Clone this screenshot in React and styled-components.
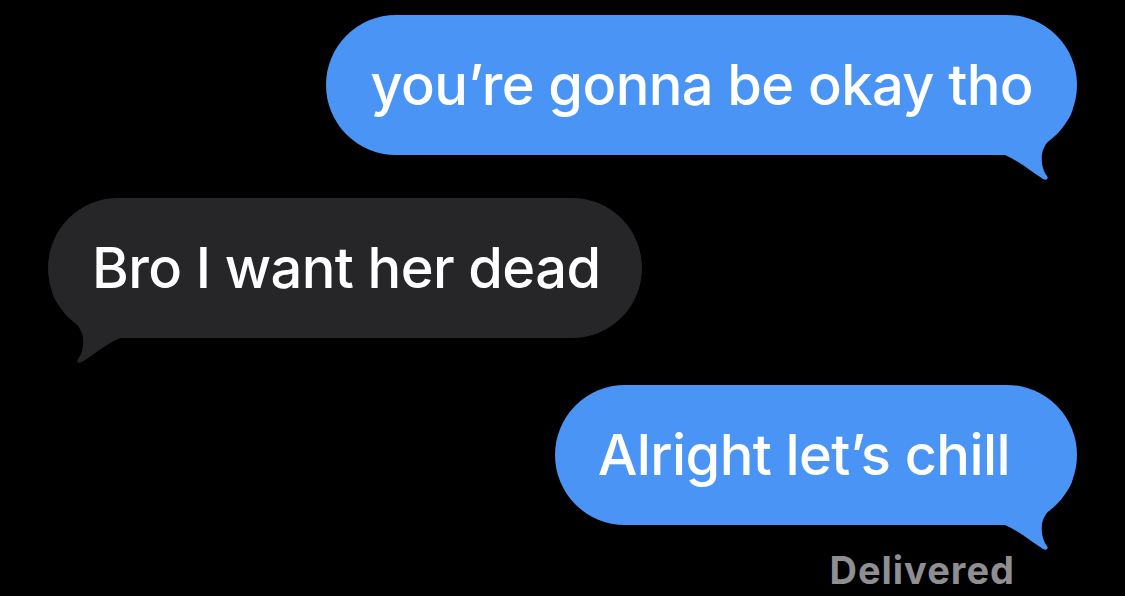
import React from "react";
import styled, { createGlobalStyle } from "styled-components";

const Global = createGlobalStyle`
  html, body {
    margin: 0;
    padding: 0;
    background: #000;
  }
  body {
    font-family: Inter, "Noto Sans", "Liberation Sans", sans-serif;
    -webkit-font-smoothing: antialiased;
  }
`;

const Thread = styled.div`
  width: 1125px;
  height: 596px;
  box-sizing: border-box;
  background: #000;
  padding: 15px 48px 0 48px;
  display: flex;
  flex-direction: column;
  overflow: hidden;
`;

const Row = styled.div`
  display: flex;
  justify-content: ${(p) => (p.$out ? "flex-end" : "flex-start")};
  margin-bottom: ${(p) => p.$gap || 0}px;
`;

const Bubble = styled.div`
  position: relative;
  height: 140px;
  box-sizing: border-box;
  padding: 0 ${(p) => p.$padRight || 44}px 0 ${(p) => p.$padLeft || 44}px;
  display: flex;
  align-items: center;
  border-radius: 70px;
  background: ${(p) => (p.$out ? "#4a94f6" : "#262629")};
  color: #fff;
  font-size: 56px;
  font-weight: 500;
  letter-spacing: -0.6px;
  white-space: nowrap;
`;

const TailSvg = styled.svg`
  position: absolute;
  bottom: -28px;
  width: 80px;
  height: 75px;
  ${(p) =>
    p.$out
      ? "right: 0;"
      : "left: 0; transform: scaleX(-1);"}
`;

const Status = styled.div`
  align-self: flex-end;
  margin-top: 22px;
  margin-right: 62px;
  color: #8e8e93;
  font-size: 38px;
  font-weight: 700;
  letter-spacing: 1px;
`;

function Tail({ out, color }) {
  return (
    <TailSvg $out={out} viewBox="0 0 80 75" aria-hidden="true">
      <path
        d="M76 0 C72 20 48 28 45 46 C44 55 46 63 50 68 C52 71 49 73 46 71 C35 64 22 53 8 47 L0 47 L0 40 Z"
        fill={color}
      />
    </TailSvg>
  );
}

function Message({ out, children, gap, padLeft, padRight }) {
  const color = out ? "#4a94f6" : "#262629";
  return (
    <Row $out={out} $gap={gap}>
      <Bubble $out={out} $padLeft={padLeft} $padRight={padRight}>
        {children}
        <Tail out={out} color={color} />
      </Bubble>
    </Row>
  );
}

export default function App() {
  return (
    <>
      <Global />
      <Thread>
        <Message out gap={43}>you’re gonna be okay tho</Message>
        <Message gap={47} padRight={42}>Bro I want her dead</Message>
        <Message out padLeft={43} padRight={67}>Alright let’s chill</Message>
        <Status>Delivered</Status>
      </Thread>
    </>
  );
}
